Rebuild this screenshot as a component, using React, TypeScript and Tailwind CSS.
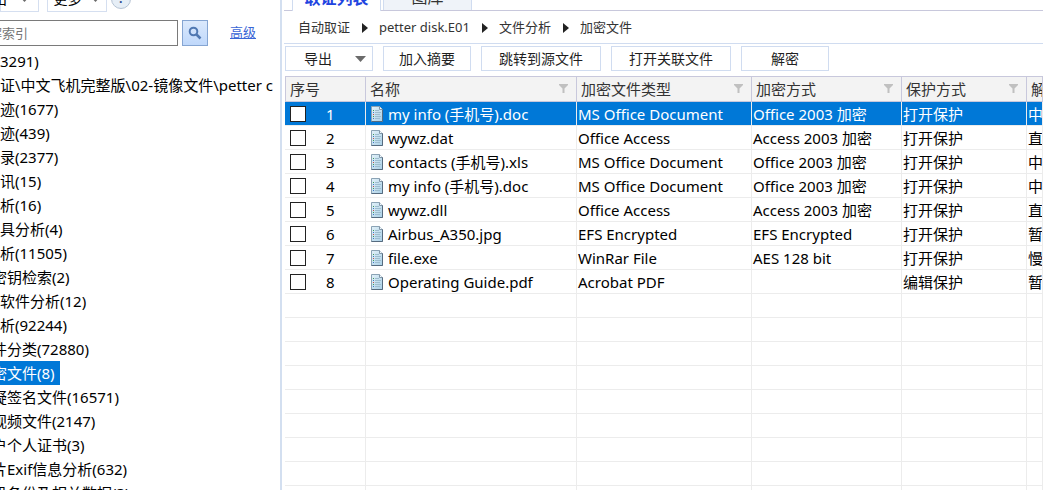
import clsx from "clsx";

const treeItems = [
  { label: "3291)" },
  { label: "证\\中文飞机完整版\\02-镜像文件\\petter c" },
  { label: "迹(1677)" },
  { label: "迹(439)" },
  { label: "录(2377)" },
  { label: "讯(15)" },
  { label: "析(16)" },
  { label: "具分析(4)" },
  { label: "析(11505)" },
  { label: "密钥检索(2)", outdent: true },
  { label: "软件分析(12)" },
  { label: "析(92244)" },
  { label: "件分类(72880)", outdent: true },
  { label: "密文件(8)", outdent: true, selected: true },
  { label: "疑签名文件(16571)", outdent: true },
  { label: "视频文件(2147)", outdent: true },
  { label: "户个人证书(3)", outdent: true },
  { label: "片Exif信息分析(632)", outdent: true },
  { label: "机备份及相关数据(3)", outdent: true },
];

const columns = ["序号", "名称", "加密文件类型", "加密方式", "保护方式", "解"];

const files = [
  ["my info (手机号).doc", "MS Office Document", "Office 2003 加密", "打开保护", "中"],
  ["wywz.dat", "Office Access", "Access 2003 加密", "打开保护", "直"],
  ["contacts (手机号).xls", "MS Office Document", "Office 2003 加密", "打开保护", "中"],
  ["my info (手机号).doc", "MS Office Document", "Office 2003 加密", "打开保护", "中"],
  ["wywz.dll", "Office Access", "Access 2003 加密", "打开保护", "直"],
  ["Airbus_A350.jpg", "EFS Encrypted", "EFS Encrypted", "打开保护", "暂"],
  ["file.exe", "WinRar File", "AES 128 bit", "打开保护", "慢"],
  ["Operating Guide.pdf", "Acrobat PDF", "", "编辑保护", "暂"],
];

const emptyRows = Array.from({ length: 9 }, (_, i) => i);

const crumbs = ["自动取证", "petter disk.E01", "文件分析", "加密文件"];

const DownArrow = () => (
  <svg width="11" height="6" viewBox="0 0 11 6" fill="#6b6b6b" className="shrink-0">
    <path d="M0 0h11L5.5 6z" />
  </svg>
);

const FilterIcon = () => (
  <svg width="9" height="10" viewBox="0 0 9 10" fill="#c0c0c0" className="shrink-0">
    <path d="M0 0h9v1L5.5 4.500V9h-2V4.500L0 1z" />
  </svg>
);

const FileIcon = () => (
  <svg width="14" height="16" viewBox="0 0 14 16" className="shrink-0">
    <defs>
      <linearGradient id="page" x1="0" y1="0" x2="1" y2="1">
        <stop offset="0" stopColor="#e3f2f9" />
        <stop offset="1" stopColor="#a9cfe6" />
      </linearGradient>
    </defs>
    <path d="M1.5.5h8l3 3v12h-11z" fill="url(#page)" stroke="#8ba3b5" />
    <path d="M9.5.5v3h3" fill="#f4fafd" stroke="#8296a8" />
    <path d="M12.5 3.500v12h-11" fill="none" stroke="#566b7f" />
    <path d="M5 4.500h4M5 6.500h6M5 8.500h5M5 10.500h6M5 12.500h5" stroke="#9dbdcf" />
    <path d="M3 4.500h1M3 10.500h1" stroke="#3f9a58" />
    <path d="M3 6.500h1M3 12.500h1" stroke="#3c78c8" />
    <path d="M3 8.500h1" stroke="#c0504d" />
  </svg>
);

const Sidebar = () => (
  <aside className="w-[280px] shrink-0 overflow-hidden">
    {/* Top actions */}
    <div className="flex h-3 items-end gap-2 text-sm">
      <button className="flex h-[26px] w-[39px] shrink-0 items-center justify-end gap-3 border border-[#d5dff0] pr-2">
        <span>出</span>
        <DownArrow />
      </button>
      <button className="flex h-[26px] w-[60px] shrink-0 items-center justify-center gap-2 border border-[#d5dff0]">
        <span>更多</span>
        <DownArrow />
      </button>
      <button className="mb-[3px] -ml-1 flex size-5 items-center justify-center rounded-full border border-[#b5c3d4] bg-[#e6eef6] text-xs font-bold text-[#2b4a90]">
        ?
      </button>
    </div>

    {/* Index search */}
    <div className="mt-2 flex items-center">
      <input
        type="text"
        aria-label="搜索"
        placeholder="解索引"
        className="-ml-3 h-[26px] w-[190px] border border-[#7a7a7a] text-[13px] outline-none placeholder:text-[#767676]"
      />
      <button
        aria-label="搜索"
        className="ml-1 flex size-[26px] items-center justify-center border border-[#85a5d2] bg-linear-to-b from-[#dbe9fc] to-[#bfd8fb]"
      >
        <svg width="14" height="14" viewBox="0 0 14 14" fill="none" stroke="#5078b2">
          <circle cx="5.500" cy="5.500" r="3.800" strokeWidth="2" />
          <path d="M8.500 8.500l4 4" strokeWidth="2.500" />
        </svg>
      </button>
      <a href="#" className="ml-[22px] text-[13px] text-[#3a66d6] underline">
        高级
      </a>
    </div>

    {/* Evidence tree */}
    <ul className="mt-[3px] text-[15px] leading-6 whitespace-nowrap">
      {treeItems.map((item) => (
        <li key={item.label} className={clsx("h-6", item.outdent && "-ml-2")}>
          <span className={clsx("inline-block h-6", item.selected && "bg-[#0078d7] pr-[5px] text-white")}>
            {item.label}
          </span>
        </li>
      ))}
    </ul>
  </aside>
);

const Toolbar = () => (
  <div className="flex gap-[10px] px-[3px] pt-[2px] pb-[5px] text-sm text-[#1f1f1f]">
    <button className="flex h-[25px] w-[88px] items-center justify-between border border-[#d0dcf0] pr-[6px] pl-[18px]">
      导出
      <DownArrow />
    </button>
    <button className="h-[25px] w-[88px] border border-[#d0dcf0]">加入摘要</button>
    <button className="h-[25px] w-[120px] border border-[#d0dcf0]">跳转到源文件</button>
    <button className="h-[25px] w-[120px] border border-[#d0dcf0]">打开关联文件</button>
    <button className="h-[25px] w-[88px] border border-[#d0dcf0]">解密</button>
  </div>
);

const FileTable = () => (
  <table className="ml-[3px] w-[calc(100%-3px)] table-fixed border-separate border-spacing-0 text-[15px] leading-5 whitespace-nowrap">
    <colgroup>
      <col className="w-[81px]" />
      <col className="w-[211px]" />
      <col className="w-[175px]" />
      <col className="w-[150px]" />
      <col className="w-[125px]" />
      <col />
    </colgroup>
    <thead>
      <tr className="h-[26px] bg-[#f3f3f3] text-left text-[#333]">
        {columns.map((name, i) => (
          <th key={name} className="overflow-hidden border-y border-r border-[#c8c8dc] p-0 pl-1 font-normal first:border-l">
            <div className="flex items-center justify-between pr-2">
              {name}
              {i > 0 && i < 5 && <FilterIcon />}
            </div>
          </th>
        ))}
      </tr>
    </thead>
    <tbody>
      {files.map((file, i) => (
        <tr key={i} className={clsx("h-6", i === 0 && "bg-[#0078d7] text-white")}>
          <td className="border-r border-b border-[#ececec] p-0 pl-[5px]">
            <div className="flex items-center">
              <input
                type="checkbox"
                aria-label={file[0]}
                className="size-4 appearance-none border border-[#222] bg-white"
              />
              <span className="ml-5">{i + 1}</span>
            </div>
          </td>
          <td className="border-r border-b border-[#ececec] p-0 pl-1">
            <div className="flex items-center gap-1">
              <FileIcon />
              {file[0]}
            </div>
          </td>
          {file.slice(1).map((value, j) => (
            <td key={j} className="overflow-hidden border-r border-b border-[#ececec] p-0 pl-px">
              {value}
            </td>
          ))}
        </tr>
      ))}
      {emptyRows.map((row) => (
        <tr key={row} className="h-6">
          {columns.map((name) => (
            <td key={name} className="border-r border-b border-[#ececec] p-0" />
          ))}
        </tr>
      ))}
    </tbody>
  </table>
);

export default function App() {
  return (
    <div className="flex h-screen overflow-hidden bg-white font-['Noto_Sans','Noto_Sans_CJK_SC',sans-serif] text-black">
      <Sidebar />

      <main className="min-w-0 flex-1 overflow-hidden border-l-2 border-[#d3dff0]">
        {/* Tabs */}
        <div className="ml-[2px] flex h-[11px] items-end gap-[2px] border-b border-[#c8c8dc] text-base">
          <button className="-mb-px ml-2 h-[26px] w-[89px] shrink-0 border-x border-[#d0dcf0] bg-white font-bold text-[#1f45e0]">
            取证列表
          </button>
          <button className="h-[26px] w-[89px] shrink-0 border-x border-[#d0dcf0] bg-[#eff3f9] text-[#333]">图库</button>
        </div>

        {/* Breadcrumb */}
        <nav className="ml-[2px] flex h-[33px] items-center gap-2 border-b border-[#d0dcf0] pt-[2px] pl-[14px] text-[13px] text-[#333]">
          {crumbs.map((crumb, i) => (
            <div key={crumb} className="flex items-center gap-[11px]">
              {i > 0 && (
                <svg width="6" height="10" viewBox="0 0 6 10" fill="#222" className="ml-1">
                  <path d="M0 0l6 5-6 5z" />
                </svg>
              )}
              <a href="#">{crumb}</a>
            </div>
          ))}
        </nav>

        <Toolbar />
        <FileTable />
      </main>
    </div>
  );
}
